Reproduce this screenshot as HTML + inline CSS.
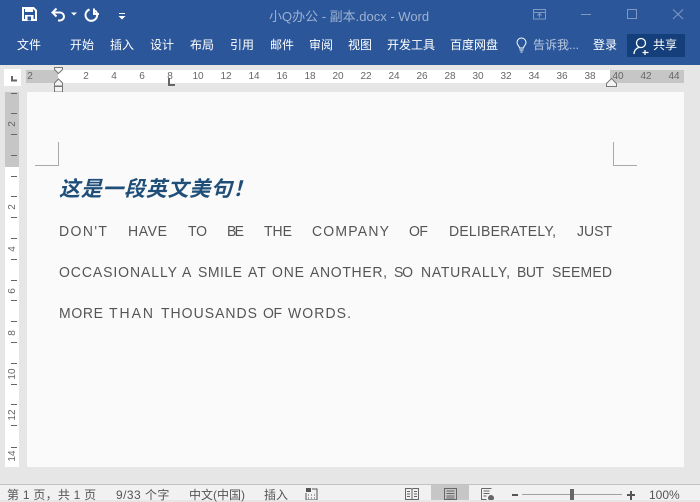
<!DOCTYPE html>
<html><head><meta charset="utf-8">
<style>
html,body{margin:0;padding:0}
body{width:700px;height:500px;overflow:hidden;position:relative;background:#e6e6e6;font-family:"Liberation Sans","Noto Sans CJK SC",sans-serif}
.a{position:absolute;white-space:nowrap}
.tab{position:absolute;top:37px;font-size:12px;line-height:16px;color:#fff;white-space:nowrap}
.rn{position:absolute;top:71px;width:20px;text-align:center;font-size:10px;line-height:12px;color:#666}
.vn{position:absolute;left:3px;width:20px;text-align:center;font-size:10px;line-height:12px;color:#666;transform:rotate(-90deg)}
.vt{position:absolute;left:11px;width:6px;height:1px;background:#666}
.st{position:absolute;top:488px;font-size:12px;line-height:14px;color:#555;white-space:nowrap}
.bt text{font-family:"Liberation Sans",sans-serif;font-size:14px;fill:#555}
</style></head>
<body>
<div class="a" style="left:0;top:0;width:700px;height:65px;background:#2b579a"></div>

<svg class="a" style="left:0;top:0" width="140" height="30" viewBox="0 0 140 30">
<path d="M23 8h10.500l2.500 2.500V20H23z" fill="none" stroke="#fff" stroke-width="2"/>
<rect x="25" y="8" width="8" height="4" fill="#fff"/>
<rect x="25" y="15" width="8.500" height="5" fill="#fff"/>
<rect x="27.500" y="16.500" width="3.500" height="4" fill="#2b579a"/>
<path d="M53 12.500h7a4 4 0 0 1 0 8h-2" fill="none" stroke="#fff" stroke-width="2"/>
<path d="M56.500 8.500l-4 4 4 4" fill="none" stroke="#fff" stroke-width="2"/>
<path d="M71 12.500h6l-3 3z" fill="#fff"/>
<path d="M89.500 9.500a5.800 5.800 0 1 0 5.500 1" fill="none" stroke="#fff" stroke-width="2"/>
<path d="M94 8.500v5.500h5" fill="none" stroke="#fff" stroke-width="2"/>
<rect x="119" y="13" width="6" height="1" fill="#fff"/>
<path d="M118.500 16h7l-3.500 3.500z" fill="#fff"/>
</svg>

<div class="a" style="left:269px;top:8px;font-size:13px;line-height:17px;color:#9db1d1">小Q办公 - 副本.docx - Word</div>

<svg class="a" style="left:525px;top:5px" width="175" height="22" viewBox="0 0 175 22" fill="none" stroke="#7f99c2" stroke-width="1">
<path d="M8.500 4.500h12v9.500h-12zM8.500 7.500h12M14.500 12.500v-4M12.500 10.500l2-2 2 2"/>
<path d="M56 9.500h10"/>
<path d="M102.500 4.500h9v9h-9z"/>
<path d="M148 4.500l10 9.500M158 4.500l-10 9.500"/>
</svg>

<div class="tab" style="left:17px">文件</div>
<div class="tab" style="left:70px">开始</div>
<div class="tab" style="left:110px">插入</div>
<div class="tab" style="left:150px">设计</div>
<div class="tab" style="left:190px">布局</div>
<div class="tab" style="left:230px">引用</div>
<div class="tab" style="left:270px">邮件</div>
<div class="tab" style="left:309px">审阅</div>
<div class="tab" style="left:348px">视图</div>
<div class="tab" style="left:387px">开发工具</div>
<div class="tab" style="left:450px">百度网盘</div>

<svg class="a" style="left:514px;top:37px" width="16" height="17" viewBox="0 0 16 17" fill="none" stroke="#fff" stroke-width="1">
<path d="M5.500 11c0-2-2.500-3-2.500-5.500a4.500 4.500 0 0 1 9 0c0 2.500-2.500 3.500-2.500 5.500z"/>
<path d="M5.500 13h4M6.500 15h2"/>
</svg>
<div class="tab" style="left:533px;color:#b9c8e0">告诉我...</div>
<div class="tab" style="left:593px">登录</div>
<div class="a" style="left:627px;top:34px;width:58px;height:23px;background:#143f7a"></div>
<svg class="a" style="left:632px;top:36px" width="20" height="20" viewBox="0 0 20 20" fill="none" stroke="#fff" stroke-width="1.300">
<circle cx="9" cy="7" r="4.500"/>
<path d="M2 18c0-3.500 2.500-6 5-6.500M13 14v5M10.500 16.500h6"/>
</svg>
<div class="tab" style="left:653px;top:37px">共享</div>

<!-- horizontal ruler -->
<div class="a" style="left:26px;top:70px;width:584px;height:13px;background:#fff"></div>
<div class="a" style="left:26px;top:70px;width:32px;height:13px;background:#c6c6c6"></div>
<div class="a" style="left:610px;top:70px;width:74px;height:13px;background:#c6c6c6"></div>
<div class="a" style="left:4px;top:69px;width:17px;height:17px;background:#fff"></div>
<svg class="a" style="left:4px;top:69px" width="17" height="17"><path d="M8 7v4.500h5" fill="none" stroke="#666" stroke-width="2"/></svg>

<div class="rn" style="left:20px">2</div>
<div class="rn" style="left:76px">2</div><div class="rn" style="left:104px">4</div><div class="rn" style="left:132px">6</div><div class="rn" style="left:160px">8</div>
<div class="rn" style="left:188px">10</div><div class="rn" style="left:216px">12</div><div class="rn" style="left:244px">14</div><div class="rn" style="left:272px">16</div>
<div class="rn" style="left:300px">18</div><div class="rn" style="left:328px">20</div><div class="rn" style="left:356px">22</div><div class="rn" style="left:384px">24</div>
<div class="rn" style="left:412px">26</div><div class="rn" style="left:440px">28</div><div class="rn" style="left:468px">30</div><div class="rn" style="left:496px">32</div>
<div class="rn" style="left:524px">34</div><div class="rn" style="left:552px">36</div><div class="rn" style="left:580px">38</div><div class="rn" style="left:608px">40</div>
<div class="rn" style="left:636px">42</div><div class="rn" style="left:664px">44</div>

<svg class="a" style="left:50px;top:66px" width="20" height="27" viewBox="0 0 20 27" fill="#f4f4f4" stroke="#777" stroke-width="1">
<path d="M4.500 1.500h8v2l-4 4-4-4z"/>
<path d="M8.500 13l4 4v3h-8v-3z"/>
<rect x="4.500" y="20.500" width="8" height="5.500"/>
</svg>
<svg class="a" style="left:167px;top:78px" width="10" height="9"><path d="M2 0v7h6" fill="none" stroke="#666" stroke-width="2"/></svg>
<svg class="a" style="left:606px;top:77px" width="12" height="10"><path d="M.5 9.500v-3l5-5 5 5v3z" fill="#f4f4f4" stroke="#777"/></svg>

<!-- vertical ruler -->
<div class="a" style="left:5px;top:92px;width:14px;height:375px;background:#fff"></div>
<div class="a" style="left:5px;top:92px;width:14px;height:75px;background:#c6c6c6"></div>
<div class="vt" style="top:93px"></div><div class="vt" style="top:113px"></div><div class="vt" style="top:134px"></div><div class="vt" style="top:155px"></div>
<div class="vt" style="top:176px"></div><div class="vt" style="top:196px"></div><div class="vt" style="top:217px"></div><div class="vt" style="top:238px"></div>
<div class="vt" style="top:259px"></div><div class="vt" style="top:280px"></div><div class="vt" style="top:300px"></div><div class="vt" style="top:321px"></div>
<div class="vt" style="top:342px"></div><div class="vt" style="top:363px"></div><div class="vt" style="top:384px"></div><div class="vt" style="top:404px"></div>
<div class="vt" style="top:425px"></div><div class="vt" style="top:447px"></div>
<div class="vn" style="top:118px">2</div>
<div class="vn" style="top:201px">2</div><div class="vn" style="top:243px">4</div><div class="vn" style="top:285px">6</div><div class="vn" style="top:327px">8</div>
<div class="vn" style="top:368px">10</div><div class="vn" style="top:409px">12</div><div class="vn" style="top:450px">14</div>

<!-- page -->
<div class="a" style="left:27px;top:92px;width:657px;height:375px;background:#fafafa"></div>
<div class="a" style="left:35px;top:165px;width:24px;height:1px;background:#aaa"></div>
<div class="a" style="left:58px;top:142px;width:1px;height:24px;background:#aaa"></div>
<div class="a" style="left:613px;top:165px;width:24px;height:1px;background:#aaa"></div>
<div class="a" style="left:613px;top:142px;width:1px;height:24px;background:#aaa"></div>

<div class="a" style="left:59px;top:178px;font-size:21px;line-height:24px;font-weight:bold;font-style:italic;color:#1f4e79;letter-spacing:.7px">这是一段英文美句！</div>

<svg class="a bt" style="left:0;top:0" width="700" height="340">
<g transform="scale(1 1.07)">
<text x="59" y="220.56" textLength="48">DON'T</text>
<text x="128" y="220.56" textLength="39">HAVE</text>
<text x="188" y="220.56" textLength="19">TO</text>
<text x="227" y="220.56" textLength="17">BE</text>
<text x="264" y="220.56" textLength="28">THE</text>
<text x="312" y="220.56" textLength="77">COMPANY</text>
<text x="409" y="220.56" textLength="19">OF</text>
<text x="449" y="220.56" textLength="107">DELIBERATELY,</text>
<text x="577" y="220.56" textLength="35">JUST</text>

<text x="59" y="258.88" textLength="118">OCCASIONALLY</text>
<text x="182" y="258.88" textLength="10">A</text>
<text x="198" y="258.88" textLength="44">SMILE</text>
<text x="248" y="258.88" textLength="18">AT</text>
<text x="272" y="258.88" textLength="32">ONE</text>
<text x="310" y="258.88" textLength="77">ANOTHER,</text>
<text x="394" y="258.88" textLength="19">SO</text>
<text x="421" y="258.88" textLength="89">NATURALLY,</text>
<text x="517" y="258.88" textLength="27">BUT</text>
<text x="552" y="258.88" textLength="60">SEEMED</text>

<text x="59" y="297.2" textLength="44">MORE</text>
<text x="109" y="297.2" textLength="44">THAN</text>
<text x="161" y="297.2" textLength="96">THOUSANDS</text>
<text x="263" y="297.2" textLength="19">OF</text>
<text x="288" y="297.2" textLength="63">WORDS.</text>
</g>
</svg>

<!-- status bar -->
<div class="a" style="left:0;top:484px;width:700px;height:16px;background:#f1f1f1;border-top:1px solid #c6c1c1;box-sizing:border-box"></div>
<div class="st" style="left:7px;letter-spacing:.25px">第 1 页，共 1 页</div>
<div class="st" style="left:116px;letter-spacing:.45px">9/33 个字</div>
<div class="st" style="left:189px">中文(中国)</div>
<div class="st" style="left:264px">插入</div>
<svg class="a" style="left:305px;top:488px" width="14" height="12" fill="#555"><rect x="1" y="0" width="5" height="4"/><path d="M7 1h5v11H1V5" fill="none" stroke="#555"/><path d="M3 7h1M6 7h1M9 7h1M3 10h1M6 10h1M9 10h1" stroke="#555"/></svg>
<div class="a" style="left:431px;top:485px;width:38px;height:15px;background:#c6c6c6"></div>
<svg class="a" style="left:400px;top:485px" width="100" height="15" fill="none" stroke="#666" stroke-width="1">
<path d="M5.500 3.500h5.500l1 1 1-1h5.500v11h-13zM12 4.500v10M7 6.500h3M7 9h3M7 11.500h3M14 6.500h3M14 9h3M14 11.500h3"/>
<path d="M44.500 3.500h12v11h-12zM46.500 6h8M46.500 8.500h8M46.500 11h8M46.500 13h8"/>
<path d="M81.500 3.500h10M81.500 3.500v11h5M83.500 6h6M83.500 8.500h6M83.500 11h3"/>
<circle cx="91" cy="13" r="3" fill="#666" stroke="none"/>
</svg>
<div class="a" style="left:512px;top:494px;width:6px;height:2px;background:#555"></div>
<div class="a" style="left:522px;top:494px;width:100px;height:1px;background:#a0a0a0"></div>
<div class="a" style="left:570px;top:489px;width:4px;height:11px;background:#666"></div>
<div class="a" style="left:627px;top:494px;width:8px;height:2px;background:#555"></div>
<div class="a" style="left:630px;top:491px;width:2px;height:9px;background:#555"></div>
<div class="st" style="left:649px">100%</div>
</body></html>
